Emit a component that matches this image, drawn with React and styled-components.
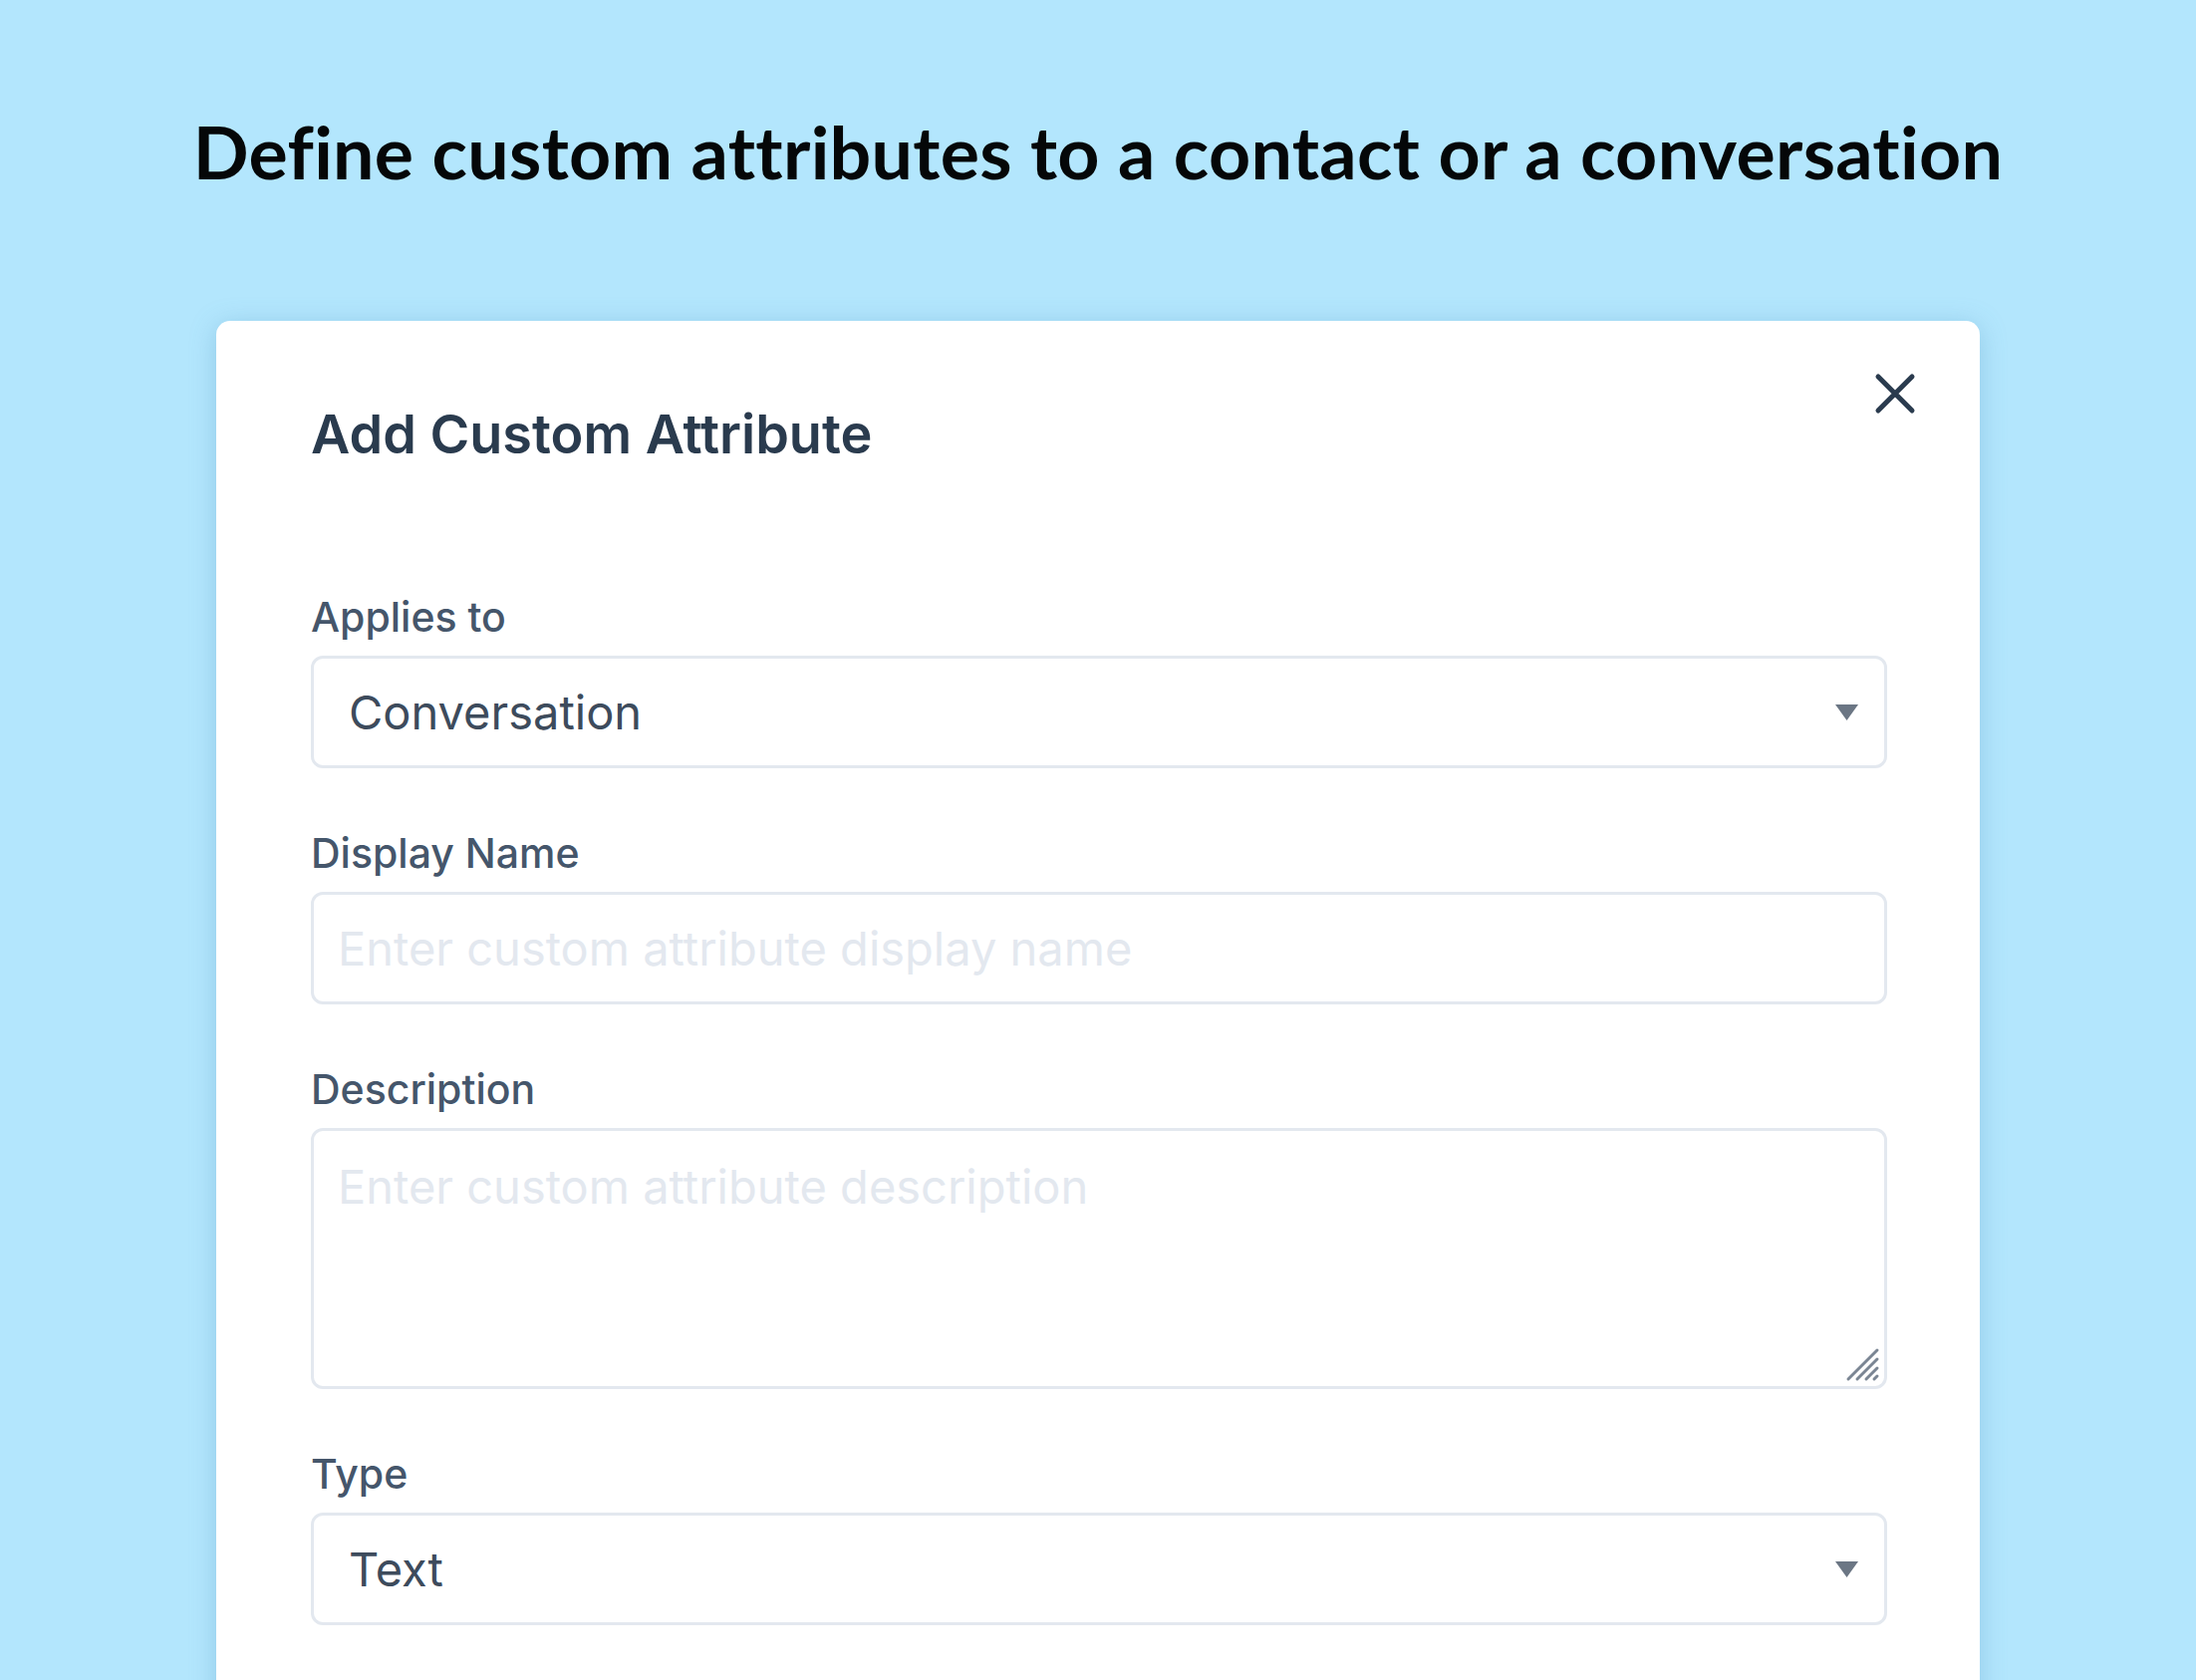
import styled, { createGlobalStyle } from 'styled-components'

const Global = createGlobalStyle`
  html, body { margin: 0; padding: 0; }
  body { background: #b3e6fd; overflow: hidden; }
  * { box-sizing: border-box; }
`

const Page = styled.div`
  width: 2204px;
  height: 1686px;
  overflow: hidden;
  display: flex;
  flex-direction: column;
  align-items: center;
  background: #b3e6fd;
`

const Heading = styled.h1`
  margin: 104px 0 0;
  font-family: Lato, "Open Sans", sans-serif;
  font-weight: 700;
  font-size: 73.5px;
  line-height: 96px;
  color: #050708;
  letter-spacing: 0.3px;
`

const Card = styled.div`
  position: relative;
  margin-top: 122px;
  width: 1770px;
  flex: 1 0 auto;
  min-height: 1500px;
  background: #fff;
  border-radius: 14px;
  box-shadow: 0 4px 26px rgba(80, 150, 190, 0.35);
  padding: 82px 93px 0 95px;
  font-family: Inter, "Noto Sans", sans-serif;
`

const Title = styled.h2`
  margin: 0;
  font-size: 54px;
  line-height: 64px;
  font-weight: 600;
  color: #2a3b4e;
`

const Close = styled.button`
  position: absolute;
  top: 51px;
  right: 63px;
  width: 44px;
  height: 44px;
  padding: 0;
  border: 0;
  background: none;
  display: flex;
  align-items: center;
  justify-content: center;
`

const Form = styled.div`
  margin-top: 126px;
  display: flex;
  flex-direction: column;
`

const Field = styled.div`
  display: flex;
  flex-direction: column;
  margin-bottom: 60px;
`

const Label = styled.label`
  font-size: 41px;
  line-height: 50px;
  font-weight: 500;
  color: #45566b;
  margin-bottom: 14px;
`

const Box = styled.div`
  position: relative;
  height: ${p => p.$h || 113}px;
  border: 3px solid #e3e8ef;
  border-radius: 12px;
  background: #fff;
  display: flex;
  align-items: ${p => (p.$top ? 'flex-start' : 'center')};
  justify-content: space-between;
  padding: ${p => (p.$top ? '28px 24px 0 24px' : p.$select ? '0 26px 0 35px' : '0 24px')};
`

const Value = styled.span`
  font-size: 47px;
  color: #3d4b5c;
`

const Input = styled.input`
  width: 100%;
  border: 0;
  outline: none;
  padding: 0;
  font-family: inherit;
  font-size: 47px;
  color: #3d4b5c;
  background: transparent;
  &::placeholder { color: #e3e8ef; }
`

const Area = styled.textarea`
  width: 100%;
  height: 100%;
  border: 0;
  outline: none;
  padding: 0;
  resize: none;
  font-family: inherit;
  font-size: 47px;
  line-height: 56px;
  color: #3d4b5c;
  background: transparent;
  &::placeholder { color: #e3e8ef; }
`

const Grip = styled.svg`
  position: absolute;
  right: 4px;
  bottom: 4px;
`

const Arrow = () => (
  <svg width="23" height="16" viewBox="0 0 23 16">
    <path d="M0 0 L23 0 L11.5 16 Z" fill="#6b7684" />
  </svg>
)

function Select({ value }) {
  return (
    <Box $select>
      <Value>{value}</Value>
      <Arrow />
    </Box>
  )
}

export default function App() {
  return (
    <Page>
      <Global />
      <Heading>Define custom attributes to a contact or a conversation</Heading>
      <Card>
        <Close aria-label="close">
          <svg width="42" height="42" viewBox="0 0 42 42">
            <path d="M4 4 L38 38 M38 4 L4 38" stroke="#2a3b4e" strokeWidth="5" strokeLinecap="round" />
          </svg>
        </Close>
        <Title>Add Custom Attribute</Title>
        <Form>
          <Field>
            <Label>Applies to</Label>
            <Select value="Conversation" />
          </Field>
          <Field>
            <Label>Display Name</Label>
            <Box>
              <Input placeholder="Enter custom attribute display name" />
            </Box>
          </Field>
          <Field>
            <Label>Description</Label>
            <Box $h={262} $top>
              <Area placeholder="Enter custom attribute description" />
              <Grip width="36" height="36" viewBox="0 0 36 36">
                <path d="M4 33 L33 4 M13 33 L33 13 M22 33 L33 22 M30 33 L33 30" stroke="#7a8593" strokeWidth="3" strokeLinecap="round" />
              </Grip>
            </Box>
          </Field>
          <Field>
            <Label>Type</Label>
            <Select value="Text" />
          </Field>
        </Form>
      </Card>
    </Page>
  )
}
